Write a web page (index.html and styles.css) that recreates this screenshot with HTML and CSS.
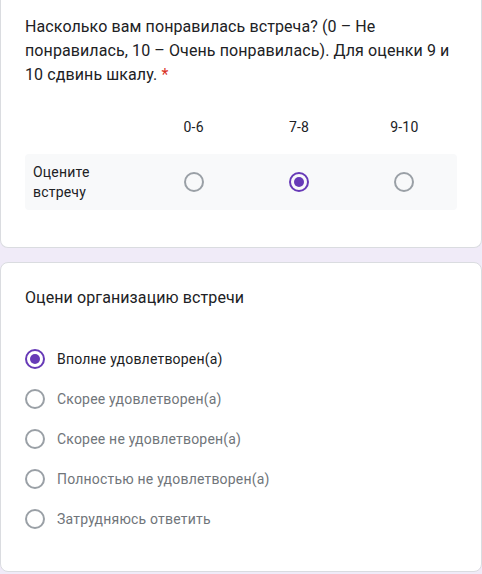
FILE: index.html
```html
<!DOCTYPE html>
<html lang="ru">
<head>
    <meta charset="UTF-8">
    <title>Опрос о встрече</title>
    <link rel="stylesheet" href="styles.css">
</head>
<body>

<div class="card card-first">
    <div class="question-title">
        Насколько вам понравилась встреча? (0 – Не понравилась, 10 – Очень понравилась). Для оценки 9 и 10 сдвинь шкалу.<span class="required">&nbsp;*</span>
    </div>

    <div class="grid">
        <div class="grid-head"></div>
        <div class="grid-head">0-6</div>
        <div class="grid-head">7-8</div>
        <div class="grid-head">9-10</div>

        <div class="grid-row">
            <div class="row-label">Оцените встречу</div>
            <div class="cell"><span class="radio"></span></div>
            <div class="cell"><span class="radio checked"></span></div>
            <div class="cell"><span class="radio"></span></div>
        </div>
    </div>
</div>

<div class="card">
    <div class="question-title">Оцени организацию встречи</div>

    <div class="options">
        <div class="option selected"><span class="radio checked"></span>Вполне удовлетворен(а)</div>
        <div class="option"><span class="radio"></span>Скорее удовлетворен(а)</div>
        <div class="option"><span class="radio"></span>Скорее не удовлетворен(а)</div>
        <div class="option"><span class="radio"></span>Полностью не удовлетворен(а)</div>
        <div class="option"><span class="radio"></span>Затрудняюсь ответить</div>
    </div>
</div>

</body>
</html>
```

FILE: styles.css
```css
body {
    margin: 0;
    background-color: #f0ebf8;
    font-family: Roboto, "Liberation Sans", sans-serif;
    color: #202124;
}
.card {
    background-color: #fff;
    border: 1px solid #dadce0;
    border-radius: 8px;
    padding: 23px 24px 32px;
    margin-bottom: 14px;
}
.card-first {
    border-top: 0;
    border-radius: 0 0 8px 8px;
    padding-top: 15px;
    padding-bottom: 37px;
}
.question-title {
    font-size: 16px;
    line-height: 24px;
    letter-spacing: 0.1px;
}
.required {
    color: #d93025;
}
.grid {
    display: grid;
    grid-template-columns: 116px repeat(3, 1fr);
    margin-top: 30px;
    font-size: 14px;
    line-height: 20px;
    letter-spacing: 0.2px;
}
.grid-head {
    text-align: center;
    padding-bottom: 17px;
}
.grid-row {
    display: contents;
}
.row-label,
.cell {
    background-color: #f8f9fa;
    padding: 8px 0;
    display: flex;
    align-items: center;
}
.row-label {
    padding-left: 8px;
    border-radius: 4px 0 0 4px;
}
.cell {
    justify-content: center;
}
.cell:last-child {
    border-radius: 0 4px 4px 0;
}
.radio {
    box-sizing: border-box;
    width: 20px;
    height: 20px;
    border: 2px solid #9aa0a6;
    border-radius: 50%;
    display: inline-flex;
    align-items: center;
    justify-content: center;
    flex-shrink: 0;
}
.radio.checked {
    border-color: #673ab7;
}
.radio.checked::after {
    content: "";
    width: 10px;
    height: 10px;
    border-radius: 50%;
    background-color: #673ab7;
}
.options {
    margin-top: 29px;
}
.option {
    display: flex;
    align-items: center;
    height: 40px;
    font-size: 14px;
    letter-spacing: 0.2px;
    color: #70757a;
}
.option .radio {
    margin-right: 12px;
}
.option.selected {
    color: #202124;
}
```
